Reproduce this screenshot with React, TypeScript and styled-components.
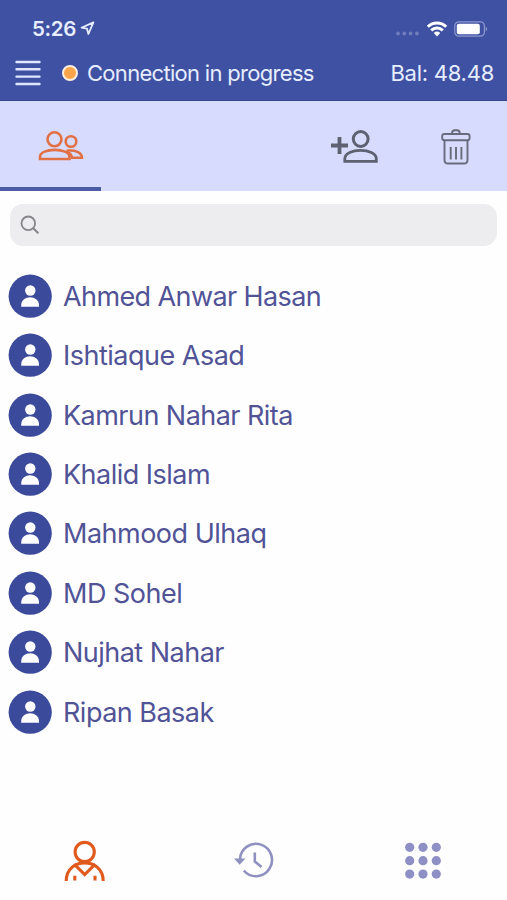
import React from "react";
import styled, { createGlobalStyle } from "styled-components";

const GlobalStyle = createGlobalStyle`
  *, *::before, *::after { box-sizing: border-box; }
  html, body, #root { height: 100%; margin: 0; }
  body { background: #fefefe; font-family: Inter, "Liberation Sans", sans-serif; }
  button { border: 0; padding: 0; background: none; font: inherit; display: flex; }
  svg { display: block; flex: none; }
`;

const Screen = styled.main`
  width: 507px;
  height: 900px;
  display: flex;
  flex-direction: column;
  overflow: hidden;
  background: #fefefe;
`;

const Header = styled.header`
  flex: none;
  height: 101px;
  background: #3f51a3;
  color: #e6edff;
  border-bottom: 1px solid #37458f;
`;

const StatusBar = styled.div`
  height: 56px;
  padding: 1px 19px 0 32px;
  display: flex;
  align-items: center;
  justify-content: space-between;
`;

const StatusGroup = styled.div<{ $gap: number }>`
  display: flex;
  align-items: center;
  gap: ${(p) => p.$gap}px;
`;

const Clock = styled.span`
  font-size: 20.5px;
  font-weight: 600;
  letter-spacing: -0.3px;
  line-height: 24px;
`;

const AccountBar = styled.div`
  height: 34px;
  padding: 0 13px 0 15px;
  display: flex;
  align-items: center;
`;

const StatusDot = styled.span`
  width: 16px;
  height: 16px;
  margin: 0 9px 0 21px;
  border-radius: 50%;
  border: 2px solid #fff0e0;
  background: #fba54a;
`;

const BarText = styled.span<{ $spacing: number }>`
  font-size: 22px;
  line-height: 28px;
  letter-spacing: ${(p) => p.$spacing}px;
  white-space: nowrap;
`;

const Spacer = styled.span`
  flex: 1;
`;

const Toolbar = styled.nav`
  flex: none;
  height: 90px;
  display: grid;
  grid-template-columns: repeat(5, 1fr);
  background: #d7dcff;
`;

const ToolTab = styled.button<{ $active?: boolean; $column: number }>`
  grid-column: ${(p) => p.$column};
  grid-row: 1;
  align-items: center;
  justify-content: center;
  border-bottom: 4px solid ${(p) => (p.$active ? "#4b5ba5" : "transparent")};
`;

const ToolIcon = styled.span<{ $left?: number; $top: number }>`
  padding-left: ${(p) => p.$left ?? 0}px;
  padding-top: ${(p) => p.$top}px;
`;

const SearchField = styled.label`
  flex: none;
  height: 42px;
  margin: 13px 10px 0 10px;
  padding-left: 10px;
  display: flex;
  align-items: center;
  border-radius: 13px;
  background: #ededef;
`;

const SearchInput = styled.input`
  flex: 1;
  border: 0;
  outline: 0;
  background: transparent;
  font: inherit;
`;

const ContactList = styled.ul`
  flex: 1;
  margin: 20px 0 0;
  padding: 0;
  list-style: none;
`;

const Contact = styled.li`
  height: 59.43px;
  padding-left: 8px;
  display: flex;
  align-items: center;
  gap: 11px;
`;

const ContactName = styled.span<{ $spacing: number }>`
  font-size: 27px;
  line-height: 34px;
  padding-top: 2px;
  letter-spacing: ${(p) => p.$spacing}px;
  color: #515397;
  white-space: nowrap;
`;

const BottomBar = styled.nav`
  flex: none;
  height: 80px;
  padding-top: 1px;
  display: grid;
  grid-template-columns: repeat(3, 1fr);
`;

const BottomTab = styled.button`
  align-items: center;
  justify-content: center;
`;

const contacts = [
  { name: "Ahmed Anwar Hasan", spacing: -0.6 },
  { name: "Ishtiaque Asad", spacing: -0.5 },
  { name: "Kamrun Nahar Rita", spacing: -0.54 },
  { name: "Khalid Islam", spacing: -0.52 },
  { name: "Mahmood Ulhaq", spacing: -0.5 },
  { name: "MD Sohel", spacing: -0.5 },
  { name: "Nujhat Nahar", spacing: -0.52 },
  { name: "Ripan Basak", spacing: -0.52 },
];

const LocationIcon = () => (
  <svg width="15" height="15" viewBox="0 0 15 15" fill="none">
    <path d="M13.4 1.4 1.5 6.7 7 7.7 8.4 13Z" stroke="#e6edff" strokeWidth="1.8" strokeLinejoin="round" />
  </svg>
);

const SignalDots = () => (
  <svg width="24" height="22" viewBox="0 0 24 22" fill="#6f7dbf">
    {[2, 8.3, 14.6, 20.9].map((x) => (
      <circle key={x} cx={x} cy="15.5" r="1.9" />
    ))}
  </svg>
);

const WifiIcon = () => (
  <svg width="20" height="16" viewBox="0 0 20 16" fill="none" stroke="#fff" strokeWidth="2.9">
    <path d="M.8 5.8C5.8.7 14.2.7 19.2 5.8" />
    <path d="M4.2 9.4C7.5 6.1 12.5 6.1 15.8 9.4" />
    <path d="M6.8 12Q10 9.1 13.2 12L10 15.5Z" fill="#fff" stroke="none" />
  </svg>
);

const BatteryIcon = () => (
  <svg width="34" height="16" viewBox="0 0 34 16" fill="none">
    <rect x=".8" y=".8" width="29.6" height="14.4" rx="4" stroke="#8d99cf" strokeWidth="1.2" />
    <rect x="2.8" y="2.8" width="23" height="10.4" rx="2" fill="#fff" />
    <path d="M31.8 5.5Q34 8 31.8 10.5Z" fill="#a4add9" />
  </svg>
);

const MenuIcon = () => (
  <svg width="26" height="26" viewBox="0 0 26 26" stroke="#e0e7ff" strokeWidth="2.4" strokeLinecap="round">
    <path d="M1.5 2h23M1.5 9.3h23M1.5 16.6h23M1.5 24h23" />
  </svg>
);

const PeopleIcon = () => (
  <svg width="46" height="32" viewBox="0 0 46 32" fill="none" stroke="#e27045" strokeWidth="2.6">
    <circle cx="16.5" cy="9.3" r="7" />
    <circle cx="33" cy="11.5" r="5.3" />
    <path d="M2 29V27C2 17.5 31.5 17.5 31.5 27V29Z" />
    <path d="M28.5 20.8C37 19.5 44 22.5 44 27.8H34C34 25 32.2 23.5 28.2 21.2" />
  </svg>
);

const AddPersonIcon = () => (
  <svg width="48" height="34" viewBox="0 0 48 34" fill="none" stroke="#5e616f" strokeWidth="3">
    <path d="M0 15.5h17M8.5 7v17" strokeWidth="3.8" />
    <circle cx="29.7" cy="9" r="7.4" />
    <path d="M13.8 31.3V28.7C13.8 17.7 45.3 17.7 45.3 28.7V31.3Z" strokeWidth="2.8" />
  </svg>
);

const TrashIcon = () => (
  <svg width="30" height="36" viewBox="0 0 30 36" fill="none" stroke="#686b7b" strokeWidth="1.9">
    <rect x="1.2" y="5" width="27.4" height="6.2" rx="2.3" />
    <path d="M11 5V4.4Q11 1.2 13.8 1.2h2Q18.8 1.2 18.8 4.4V5" />
    <path d="M3.5 11.2V31Q3.5 34.5 7 34.5H23Q26.5 34.5 26.5 31V11.2" />
    <path d="M9.7 18v12.5M15 18v12.5M20.4 18v12.5" />
  </svg>
);

const SearchIcon = () => (
  <svg width="20" height="20" viewBox="0 0 20 20" fill="none" stroke="#85858a" strokeWidth="1.8" strokeLinecap="round">
    <circle cx="8.3" cy="8.3" r="6.8" />
    <path d="m13.3 13.3 4.5 4.5" strokeWidth="2" />
  </svg>
);

const Avatar = () => (
  <svg width="44" height="44" viewBox="0 0 44 44">
    <circle cx="22.2" cy="22.2" r="21.6" fill="#3c4a9b" />
    <circle cx="22.3" cy="16.5" r="5.2" fill="#fcfcff" />
    <path d="M13.2 32.8V31.5C13.2 20.6 31 20.6 31 31.5V32.8Z" fill="#fcfcff" />
  </svg>
);

const ProfileIcon = () => (
  <svg width="42" height="42" viewBox="0 0 42 42" fill="none" stroke="#df5a1c" strokeWidth="3.1">
    <circle cx="20.7" cy="12" r="9.6" />
    <path d="M2.2 41C2.2 16.8 39.2 16.8 39.2 41" />
    <path d="M10.2 24.2 20.7 34.6 31.2 24.2" />
    <path d="M10.8 35.7V40.4M31 35.7V40.4" />
  </svg>
);

const HistoryIcon = () => (
  <svg width="42" height="38" viewBox="0 0 42 38" fill="none" stroke="#9091c1" strokeWidth="2.6">
    <path d="M7 17.3A16 16.2 0 1 1 10.8 28.5" />
    <path d="M1 16.5H12.5L6.7 22.8Z" fill="#9091c1" stroke="none" />
    <path d="M21.8 10.5V19.5L28.5 25" />
  </svg>
);

const KeypadIcon = () => (
  <svg width="38" height="38" viewBox="0 0 38 38" fill="#8d8fc5">
    {[5.3, 18.7, 32.1].flatMap((y) =>
      [5.7, 19, 32.3].map((x) => <circle key={`${x}-${y}`} cx={x} cy={y} r="4.6" />)
    )}
  </svg>
);

export default function App() {
  return (
    <>
      <GlobalStyle />
      <Screen>
        <Header>
          <StatusBar>
            <StatusGroup $gap={4}>
              <Clock>5:26</Clock>
              <LocationIcon />
            </StatusGroup>
            <StatusGroup $gap={7}>
              <SignalDots />
              <WifiIcon />
              <BatteryIcon />
            </StatusGroup>
          </StatusBar>
          <AccountBar>
            <button aria-label="Menu"><MenuIcon /></button>
            <StatusDot />
            <BarText $spacing={-0.7}>Connection in progress</BarText>
            <Spacer />
            <BarText $spacing={-0.25}>Bal: 48.48</BarText>
          </AccountBar>
        </Header>
        <Toolbar>
          <ToolTab $column={1} $active aria-label="Contacts">
            <ToolIcon $left={20} $top={4}><PeopleIcon /></ToolIcon>
          </ToolTab>
          <ToolTab $column={4} aria-label="Add contact">
            <ToolIcon $top={5}><AddPersonIcon /></ToolIcon>
          </ToolTab>
          <ToolTab $column={5} aria-label="Delete">
            <ToolIcon $top={6}><TrashIcon /></ToolIcon>
          </ToolTab>
        </Toolbar>
        <SearchField>
          <SearchIcon />
          <SearchInput aria-label="Search contacts" />
        </SearchField>
        <ContactList>
          {contacts.map((c) => (
            <Contact key={c.name}>
              <Avatar />
              <ContactName $spacing={c.spacing}>{c.name}</ContactName>
            </Contact>
          ))}
        </ContactList>
        <BottomBar>
          <BottomTab aria-label="Profile"><ProfileIcon /></BottomTab>
          <BottomTab aria-label="History"><HistoryIcon /></BottomTab>
          <BottomTab aria-label="Keypad"><KeypadIcon /></BottomTab>
        </BottomBar>
      </Screen>
    </>
  );
}
